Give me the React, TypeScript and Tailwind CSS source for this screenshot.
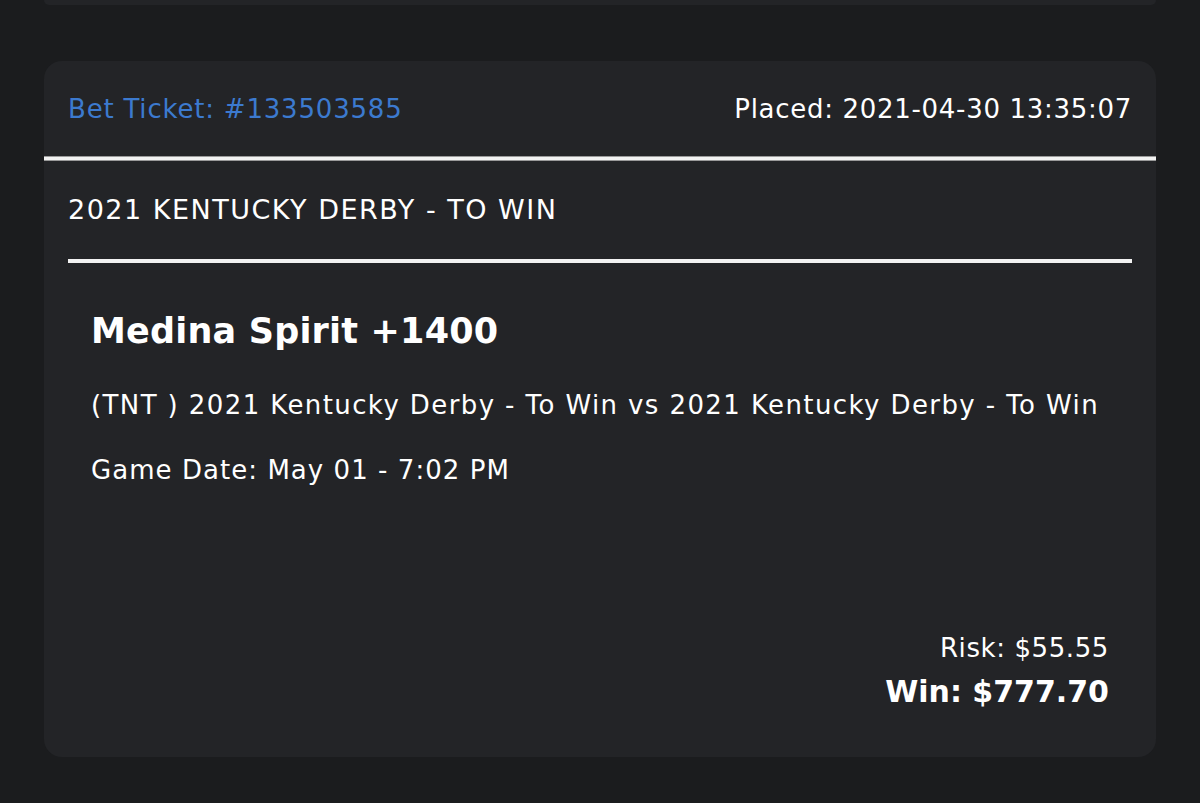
import React from "react";

export default function App() {
  const font = { fontFamily: '"DejaVu Sans", "Open Sans", sans-serif' };
  return (
    <div className="w-full h-[803px] bg-[#1b1c1e] overflow-hidden" style={font}>
      <div className="mx-[44px] h-[5px] rounded-b-[18px] bg-[#232427]" />
      <div className="mx-[44px] mt-[56px] h-[696px] rounded-[18px] bg-[#232427] flex flex-col">
        <div className="h-[95px] px-[24px] flex items-center justify-between">
          <span className="text-[26px] leading-[32px] text-[#3c7acf] tracking-[0.8px]">Bet Ticket: #133503585</span>
          <span className="text-[26px] leading-[32px] text-white tracking-[0.7px]">Placed: 2021-04-30 13:35:07</span>
        </div>
        <div className="h-[5px] bg-[#f2f2f2] border-y border-[#9a9a9a]" />
        <div className="h-[98px] px-[24px] flex items-center">
          <span className="text-[27px] leading-[32px] text-white tracking-[1.5px]">2021 KENTUCKY DERBY - TO WIN</span>
        </div>
        <div className="mx-[24px] h-[4px] bg-[#f2f2f2]" />
        <div className="flex-1 px-[47px] pb-[45px] flex flex-col">
          <div className="mt-[46px] text-[35px] leading-[44px] text-white font-bold tracking-[0.2px]">Medina Spirit +1400</div>
          <div className="mt-[36px] text-[26px] leading-[32px] text-white tracking-[1.4px] whitespace-nowrap">(TNT ) 2021 Kentucky Derby - To Win vs 2021 Kentucky Derby - To Win</div>
          <div className="mt-[33px] text-[26px] leading-[32px] text-white tracking-[1.05px]">Game Date: May 01 - 7:02 PM</div>
          <div className="mt-auto flex flex-col items-end">
            <div className="text-[26px] leading-[32px] text-white tracking-[0.6px]">Risk: $55.55</div>
            <div className="mt-[8px] text-[30px] leading-[40px] text-white font-bold">Win: $777.70</div>
          </div>
        </div>
      </div>
    </div>
  );
}
